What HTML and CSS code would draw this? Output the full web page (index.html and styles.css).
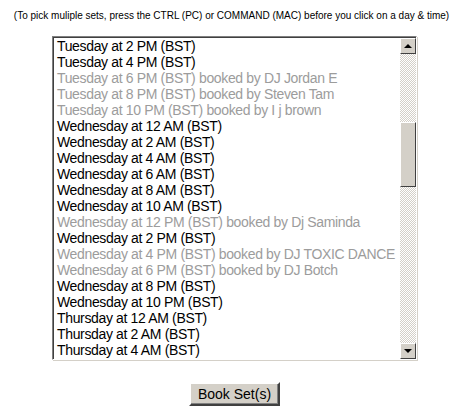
FILE: index.html
```html
<html lang="en">
  <head>
    <meta charset="UTF-8" />
    <title>Book Sets</title>
    <link rel="stylesheet" href="styles.css">
  </head>
  <body>
    <form class="book-form">
      <p class="hint">(To pick muliple sets, press the CTRL (PC) or COMMAND (MAC) before you click on a day &amp; time)</p>

      <div class="listbox">
        <ul class="slots">
          <li>Tuesday at 2 PM (BST)</li>
          <li>Tuesday at 4 PM (BST)</li>
          <li class="booked">Tuesday at 6 PM (BST) booked by DJ Jordan E</li>
          <li class="booked">Tuesday at 8 PM (BST) booked by Steven Tam</li>
          <li class="booked">Tuesday at 10 PM (BST) booked by I j brown</li>
          <li>Wednesday at 12 AM (BST)</li>
          <li>Wednesday at 2 AM (BST)</li>
          <li>Wednesday at 4 AM (BST)</li>
          <li>Wednesday at 6 AM (BST)</li>
          <li>Wednesday at 8 AM (BST)</li>
          <li>Wednesday at 10 AM (BST)</li>
          <li class="booked">Wednesday at 12 PM (BST) booked by Dj Saminda</li>
          <li>Wednesday at 2 PM (BST)</li>
          <li class="booked">Wednesday at 4 PM (BST) booked by DJ TOXIC DANCE</li>
          <li class="booked">Wednesday at 6 PM (BST) booked by DJ Botch</li>
          <li>Wednesday at 8 PM (BST)</li>
          <li>Wednesday at 10 PM (BST)</li>
          <li>Thursday at 12 AM (BST)</li>
          <li>Thursday at 2 AM (BST)</li>
          <li>Thursday at 4 AM (BST)</li>
        </ul>
        <div class="scrollbar">
          <div class="sb-btn"><span class="arrow up"></span></div>
          <div class="sb-track">
            <div class="sb-thumb"></div>
          </div>
          <div class="sb-btn"><span class="arrow down"></span></div>
        </div>
      </div>

      <div class="actions">
        <button type="button">Book Set(s)</button>
      </div>
    </form>
  </body>
</html>
```

FILE: styles.css
```css
body {
  background: white;
  margin: 0;
  font-family: "Liberation Sans", Arial, sans-serif;
}
.book-form {
  padding-top: 10px;
}
.hint {
  margin: 0;
  text-align: center;
  font-size: 10px;
  line-height: 12px;
  color: #000;
}
.listbox {
  display: flex;
  width: 363px;
  height: 322px;
  margin: 14px 0 0 52px;
  border: 1px solid;
  border-color: #808080 #fff #fff #808080;
  box-shadow: 1px 1px 0 #d4d0c8;
  overflow: hidden;
}
.slots {
  flex: 1;
  min-width: 0;
  overflow: hidden;
  margin: 0;
  padding: 0 0 0 3px;
  border-left: 1px solid #404040;
  border-top: 1px solid #404040;
  list-style: none;
}
.slots li {
  font-size: 14px;
  letter-spacing: -0.35px;
  line-height: 16px;
  height: 16px;
  white-space: nowrap;
  color: #000;
}
.slots li.booked {
  color: #9c9c9c;
}
.scrollbar {
  display: flex;
  flex-direction: column;
  flex-shrink: 0;
  width: 16px;
  border-top: 1px solid #404040;
}
.sb-btn {
  display: flex;
  align-items: center;
  justify-content: center;
  height: 16px;
  box-sizing: border-box;
  background: #d4d0c8;
  border: 1px solid;
  border-color: #fff #404040 #404040 #fff;
}
.arrow {
  width: 0;
  height: 0;
  border-left: 4px solid transparent;
  border-right: 4px solid transparent;
}
.arrow.up {
  border-bottom: 4px solid #000;
}
.arrow.down {
  border-top: 4px solid #000;
}
.sb-track {
  flex: 1;
  padding-top: 68px;
  background: repeating-conic-gradient(#d4d0c8 0 25%, #fff 0 50%);
  background-size: 2px 2px;
}
.sb-thumb {
  height: 65px;
  box-sizing: border-box;
  background: #d4d0c8;
  border: 1px solid;
  border-color: #fff #404040 #404040 #fff;
}
.actions {
  display: flex;
  justify-content: center;
  margin-top: 22px;
}
button {
  font-family: "Liberation Sans", Arial, sans-serif;
  font-size: 14px;
  width: 91px;
  height: 24px;
  padding: 0;
  margin-left: 6px;
  background: #d4d0c8;
  color: #000;
  border: 2px solid;
  border-color: #fff #404040 #404040 #fff;
  box-shadow: inset -1px -1px 0 #808080;
}
```
